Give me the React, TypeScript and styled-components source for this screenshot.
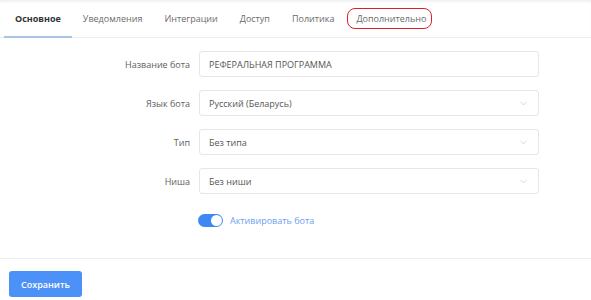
import React from "react";
import styled, { createGlobalStyle } from "styled-components";
import { ChevronDown } from "lucide-react";

const GlobalStyle = createGlobalStyle`
  body {
    margin: 0;
    background: #fff;
    font-family: "Open Sans", "Liberation Sans", sans-serif;
  }
`;

const Page = styled.div`
  width: 591px;
  height: 300px;
  display: flex;
  flex-direction: column;
  overflow: hidden;
`;

const TabBar = styled.div`
  height: 37px;
  display: flex;
  padding-left: 4px;
  border-bottom: 1px solid #ececec;
  box-shadow: inset 0 4px 4px -3px rgba(0, 0, 0, 0.09);
`;

const Tab = styled.div<{ $active?: boolean; $marked?: boolean }>`
  position: relative;
  display: flex;
  align-items: center;
  padding: 0 11px;
  margin-bottom: -1px;
  font-size: 9px;
  color: ${(p) => (p.$active ? "#333" : "#6b6b6b")};
  font-weight: ${(p) => (p.$active ? 700 : 400)};
  border-bottom: 2px solid ${(p) => (p.$active ? "#a9c3e6" : "transparent")};

  &::after {
    content: "";
    display: ${(p) => (p.$marked ? "block" : "none")};
    position: absolute;
    left: 2px;
    right: 5px;
    top: 8px;
    bottom: 7px;
    border: 1.5px solid #e11d2a;
    border-radius: 8px;
  }
`;

const Form = styled.div`
  display: grid;
  grid-template-columns: 190px 340px;
  column-gap: 9px;
  row-gap: 13px;
  padding-top: 13px;
  align-items: center;
`;

const Label = styled.div`
  text-align: right;
  font-size: 9px;
  color: #606060;
`;

const Field = styled.div`
  height: 24px;
  border: 1px solid #e6e6e6;
  border-radius: 3px;
  display: flex;
  align-items: center;
  justify-content: space-between;
  padding: 0 9px;
  font-size: 9px;
  color: #555;
`;

const ToggleRow = styled.div`
  grid-column: 2;
  display: flex;
  align-items: center;
  gap: 7px;
  margin-top: 7px;
  margin-left: -1px;
`;

const Toggle = styled.div<{ $on: boolean }>`
  width: 25px;
  height: 13px;
  border-radius: 7px;
  background: ${(p) => (p.$on ? "#3f88f4" : "#ccc")};
  display: flex;
  align-items: center;
  justify-content: ${(p) => (p.$on ? "flex-end" : "flex-start")};
  padding: 0 1px;
  box-sizing: border-box;
`;

const Knob = styled.div`
  width: 11px;
  height: 11px;
  border-radius: 50%;
  background: #fff;
`;

const ToggleText = styled.span`
  font-size: 9px;
  color: #6c9ef0;
`;

const Footer = styled.div`
  margin-top: auto;
  border-top: 1px solid #eeeeee;
  padding: 12px 9px 3px;
`;

const SaveButton = styled.button`
  width: 73px;
  height: 26px;
  border: none;
  border-radius: 3px;
  background: #4b91f7;
  color: #fff;
  font-family: inherit;
  font-size: 9px;
  font-weight: 600;
  padding: 0;
`;

const tabs = ["Основное", "Уведомления", "Интеграции", "Доступ", "Политика", "Дополнительно"];

const fields = [
  { label: "Название бота", value: "РЕФЕРАЛЬНАЯ ПРОГРАММА", select: false },
  { label: "Язык бота", value: "Русский (Беларусь)", select: true },
  { label: "Тип", value: "Без типа", select: true },
  { label: "Ниша", value: "Без ниши", select: true },
];

export default function App() {
  return (
    <Page>
      <GlobalStyle />
      <TabBar>
        {tabs.map((t, i) => (
          <Tab key={t} $active={i === 0} $marked={i === tabs.length - 1}>
            {t}
          </Tab>
        ))}
      </TabBar>
      <Form>
        {fields.map((f) => (
          <React.Fragment key={f.label}>
            <Label>{f.label}</Label>
            <Field>
              <span>{f.value}</span>
              {f.select && <ChevronDown size={11} color="#c4c4c4" strokeWidth={1.5} />}
            </Field>
          </React.Fragment>
        ))}
        <ToggleRow>
          <Toggle $on>
            <Knob />
          </Toggle>
          <ToggleText>Активировать бота</ToggleText>
        </ToggleRow>
      </Form>
      <Footer>
        <SaveButton>Сохранить</SaveButton>
      </Footer>
    </Page>
  );
}
